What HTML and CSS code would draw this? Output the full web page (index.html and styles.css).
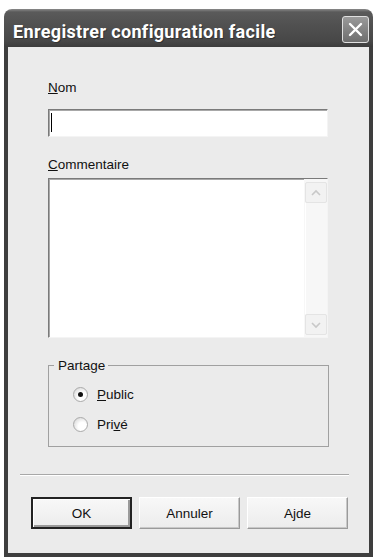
FILE: index.html
```html
<!DOCTYPE html>
<html lang="fr">
<head>
  <meta charset="UTF-8">
  <title>Enregistrer configuration facile</title>
  <link rel="stylesheet" href="styles.css">
</head>
<body>
  <div class="window">
    <div class="titlebar">
      <span class="title">Enregistrer configuration facile</span>
      <span class="close">
        <svg width="17" height="17" viewBox="0 0 17 17"><path d="M3 3 L14 14 M14 3 L3 14" stroke="#fff" stroke-width="2.4" stroke-linecap="round"/></svg>
      </span>
    </div>

    <div class="client">
      <label class="label"><u>N</u>om</label>
      <div class="edit"><span class="caret"></span></div>

      <label class="label label-comment"><u>C</u>ommentaire</label>
      <div class="memo">
        <div class="memo-text"></div>
        <div class="scrollbar">
          <span class="sb-btn">
            <svg width="12" height="8" viewBox="0 0 12 8"><path d="M2 6 L6 2 L10 6" fill="none" stroke="#c8c8c8" stroke-width="1.6"/></svg>
          </span>
          <span class="sb-track"></span>
          <span class="sb-btn">
            <svg width="12" height="8" viewBox="0 0 12 8"><path d="M2 2 L6 6 L10 2" fill="none" stroke="#c8c8c8" stroke-width="1.6"/></svg>
          </span>
        </div>
      </div>

      <fieldset class="group">
        <legend>Partage</legend>
        <div class="radio"><span class="dot checked"></span><span><u>P</u>ublic</span></div>
        <div class="radio"><span class="dot"></span><span>Pri<u>v</u>é</span></div>
      </fieldset>

      <hr class="sep">

      <div class="buttons">
        <button class="btn default">OK</button>
        <button class="btn">Annuler</button>
        <button class="btn">Ajde</button>
      </div>
    </div>
  </div>
</body>
</html>
```

FILE: styles.css
```css
* { box-sizing: border-box; margin: 0; padding: 0; }
body {
  background: #fff;
  font: 13.5px/17px "Liberation Sans", Arial, sans-serif;
  color: #111;
  padding: 9px 0 0 4px;
}
.window { width: 369px; }
.titlebar {
  height: 38px;
  border-radius: 8px 8px 0 0;
  background: linear-gradient(to bottom, #8a8a8a 0, #5a5a5a 3px, #515151 40%, #474747 85%, #3c3c3c 100%);
  display: flex;
  align-items: flex-start;
  justify-content: space-between;
  padding: 0 4px 0 9px;
}
.title {
  color: #fff;
  font: bold 18px/20px Roboto, "Liberation Sans", sans-serif;
  letter-spacing: 0.35px;
  padding-top: 13px;
  text-shadow: 1px 1px 0 #333;
}
.close {
  margin-top: 7px;
  width: 27px;
  height: 27px;
  border: 1px solid #e0e0e0;
  border-radius: 3px;
  background: linear-gradient(to bottom, #9a9a9a, #6e6e6e);
  display: flex;
  align-items: center;
  justify-content: center;
}
.client {
  background: #ebebeb;
  border: 4px solid #3e3e3e;
  border-top: none;
  height: 510px;
  padding: 32px 0 0 40px;
}
.label { display: block; height: 17px; }
.edit {
  margin-top: 13px;
  width: 280px;
  height: 28px;
  background: #fff;
  border: 1px solid;
  border-color: #7a7a7a #f4f4f4 #f4f4f4 #7a7a7a;
  box-shadow: inset 1px 1px 0 #a8a8a8;
  padding: 3px 0 0 2px;
}
.caret { display: block; width: 1px; height: 19px; background: #000; }
.label-comment { margin-top: 19px; }
.memo {
  margin-top: 5px;
  width: 280px;
  height: 160px;
  background: #fff;
  border: 1px solid;
  border-color: #7a7a7a #f4f4f4 #f4f4f4 #7a7a7a;
  box-shadow: inset 1px 1px 0 #a8a8a8;
  display: flex;
}
.memo-text { flex: 1; }
.scrollbar {
  width: 23px;
  display: flex;
  flex-direction: column;
  background: #f7f7f7;
  padding: 3px 0 2px 1px;
}
.sb-btn {
  height: 21px;
  border: 1px solid #e4e4e4;
  border-radius: 2px;
  background: #f2f2f2;
  display: flex;
  align-items: center;
  justify-content: center;
}
.sb-track { flex: 1; border-left: 1px solid #fff; }
.group {
  margin-top: 19px;
  width: 281px;
  height: 90px;
  border: 1px solid #a0a0a0;
  padding: 6px 0 0 5px;
}
.group legend { padding: 0 3px 0 4px; }
.radio {
  display: flex;
  align-items: center;
  gap: 9px;
  height: 16px;
  margin: 6px 0 14px 19px;
}
.radio + .radio { margin-top: 0; }
.dot {
  width: 15px;
  height: 15px;
  border-radius: 50%;
  border: 1px solid #aaa;
  background: radial-gradient(circle at 65% 65%, #fff 0, #fff 35%, #dcdcdc 80%, #bdbdbd 100%);
  display: flex;
  align-items: center;
  justify-content: center;
}
.dot.checked::after {
  content: "";
  width: 5px;
  height: 5px;
  border-radius: 50%;
  background: #111;
}
.sep {
  margin: 27px 20px 0 -28px;
  border: none;
  border-top: 1px solid #a8a8a8;
  border-bottom: 1px solid #fff;
}
.buttons {
  margin: 21px 0 0 -17px;
  display: flex;
  gap: 7px;
}
.btn {
  width: 101px;
  height: 32px;
  font: 13.5px "Liberation Sans", Arial, sans-serif;
  color: #111;
  background: linear-gradient(to bottom, #f8f8f8, #ececec);
  border: 1px solid;
  border-color: #fff #9a9a9a #9a9a9a #fff;
  box-shadow: inset -1px -1px 0 #c8c8c8;
}
.btn.default {
  border: 2px solid #222;
  box-shadow: inset 1px 1px 0 #fff, inset -2px -2px 0 #9a9a9a;
}
```
